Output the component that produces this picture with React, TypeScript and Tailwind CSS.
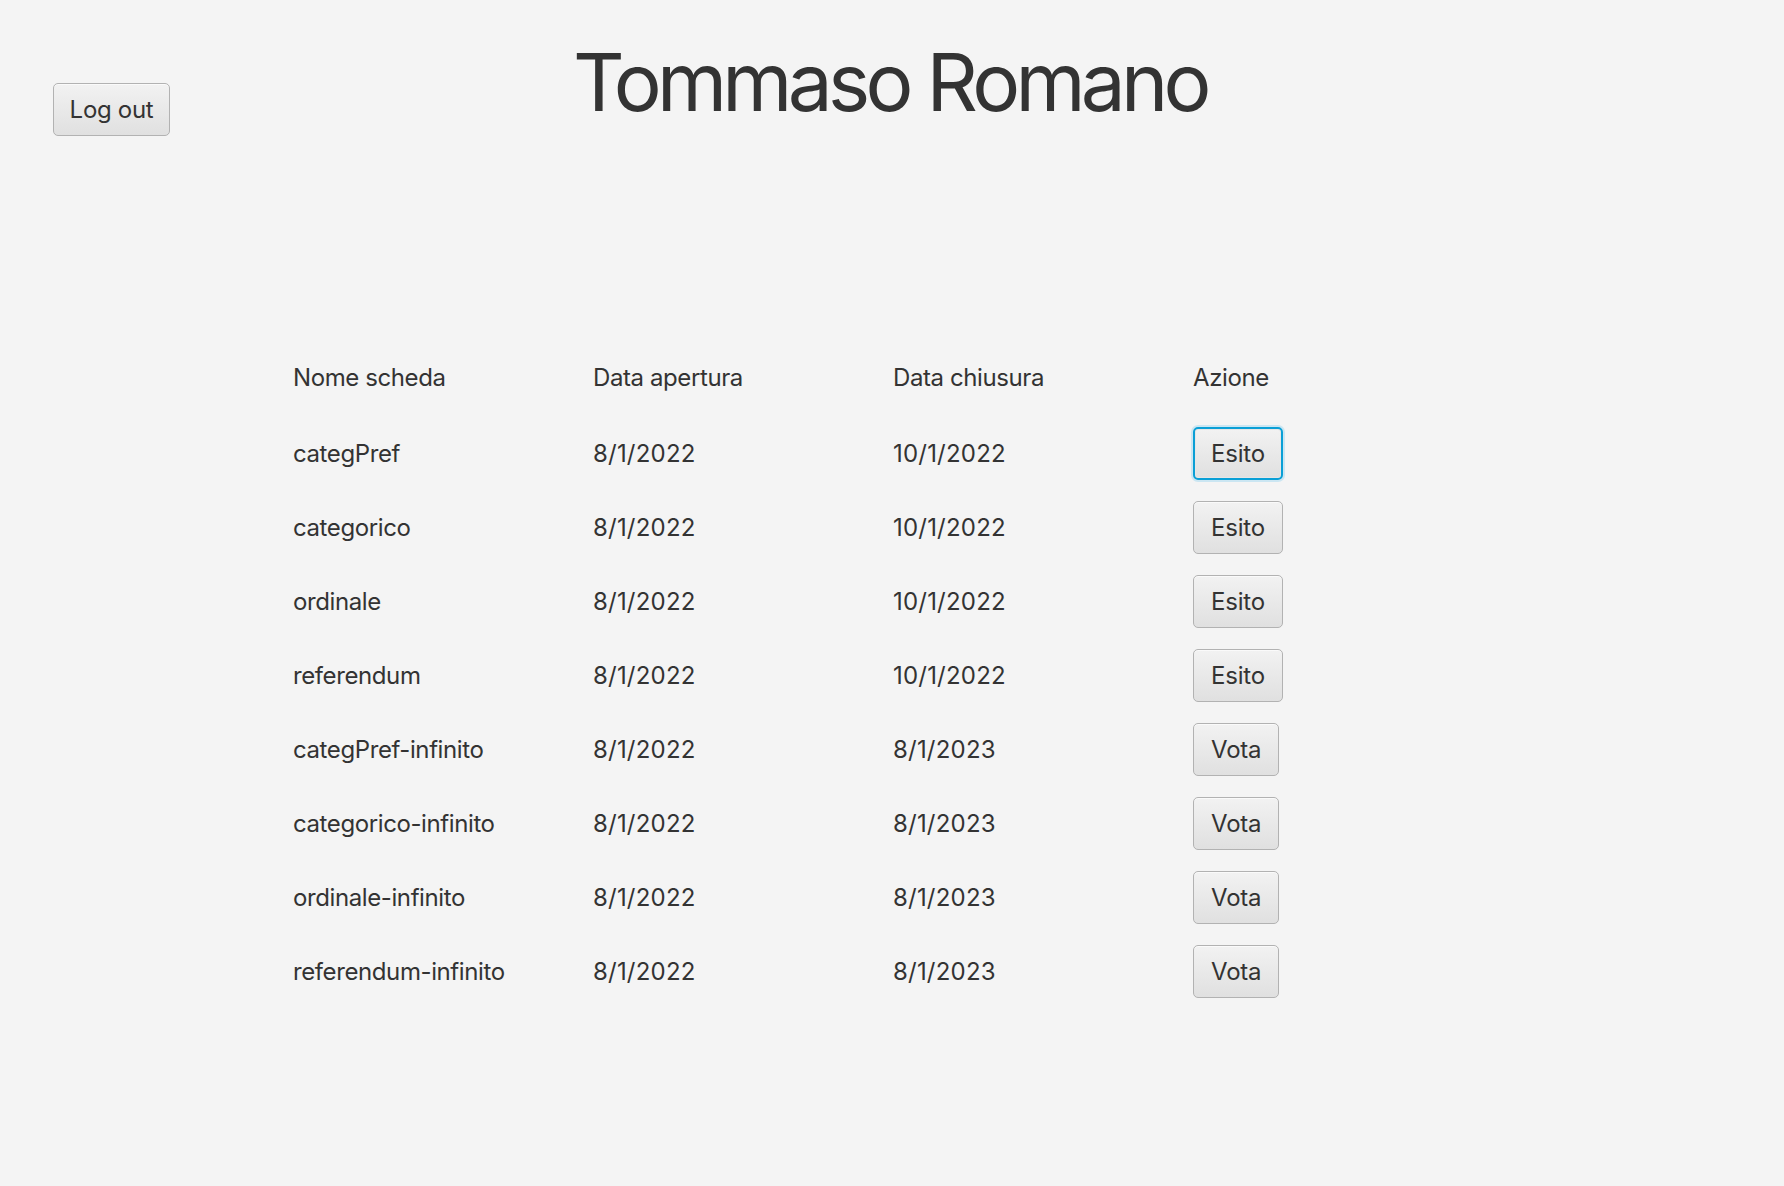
import React from "react";

const rows = [
  { nome: "categPref", aperta: "8/1/2022", chiusa: "10/1/2022", azione: "Esito" },
  { nome: "categorico", aperta: "8/1/2022", chiusa: "10/1/2022", azione: "Esito" },
  { nome: "ordinale", aperta: "8/1/2022", chiusa: "10/1/2022", azione: "Esito" },
  { nome: "referendum", aperta: "8/1/2022", chiusa: "10/1/2022", azione: "Esito" },
  { nome: "categPref-infinito", aperta: "8/1/2022", chiusa: "8/1/2023", azione: "Vota" },
  { nome: "categorico-infinito", aperta: "8/1/2022", chiusa: "8/1/2023", azione: "Vota" },
  { nome: "ordinale-infinito", aperta: "8/1/2022", chiusa: "8/1/2023", azione: "Vota" },
  { nome: "referendum-infinito", aperta: "8/1/2022", chiusa: "8/1/2023", azione: "Vota" },
];

function FxButton({ children, focused }: { children: React.ReactNode; focused?: boolean }) {
  if (focused) {
    return (
      <button className="h-[53px] px-[16px] rounded-[5px] border-2 border-[#0a9fd6] bg-gradient-to-b from-[#f2f2f2] to-[#e0e0e0] text-[24px] leading-none text-[#333] tracking-[-0.2px] shadow-[0_0_0_2px_#cbe6f2,inset_0_0_0_1px_#e6e6e6]">
        {children}
      </button>
    );
  }
  return (
    <button className="h-[53px] px-[17px] rounded-[5px] border border-[#b2b2b2] bg-gradient-to-b from-[#f2f2f2] to-[#e0e0e0] text-[24px] leading-none text-[#333] tracking-[-0.2px] shadow-[inset_0_1px_0_#fafafa]">
      {children}
    </button>
  );
}

export default function App() {
  return (
    <div
      className="w-full h-[1186px] bg-[#f4f4f4] text-[#333333]"
      style={{ fontFamily: "Inter, 'Noto Sans', sans-serif" }}
    >
      <div className="flex items-start pt-[42px] pl-[53px]">
        <div className="mt-[41px] w-[117px] flex">
          <button className="h-[53px] w-[117px] rounded-[5px] border border-[#b2b2b2] bg-gradient-to-b from-[#f2f2f2] to-[#e0e0e0] text-[24px] leading-none text-[#333] tracking-[-0.3px] shadow-[inset_0_1px_0_#fafafa]">
            Log out
          </button>
        </div>
        <h1 className="ml-[403px] text-[80px] leading-[80px] font-normal tracking-[-4.7px]">
          Tommaso Romano
        </h1>
      </div>

      <div className="mt-[215px] pl-[293px] text-[24px] tracking-[-0.4px]">
        <div className="flex items-center h-[53px]">
          <div className="w-[300px]">Nome scheda</div>
          <div className="w-[300px]">Data apertura</div>
          <div className="w-[300px]">Data chiusura</div>
          <div className="w-[300px]">Azione</div>
        </div>
        <div className="mt-[23px] flex flex-col gap-[21px]">
          {rows.map((r, i) => (
            <div key={r.nome} className="flex items-center h-[53px]">
              <div className="w-[300px]">{r.nome}</div>
              <div className="w-[300px] tracking-[0.2px]">{r.aperta}</div>
              <div className="w-[300px] tracking-[0.2px]">{r.chiusa}</div>
              <div className="w-[300px] flex">
                <FxButton focused={i === 0}>{r.azione}</FxButton>
              </div>
            </div>
          ))}
        </div>
      </div>
    </div>
  );
}
